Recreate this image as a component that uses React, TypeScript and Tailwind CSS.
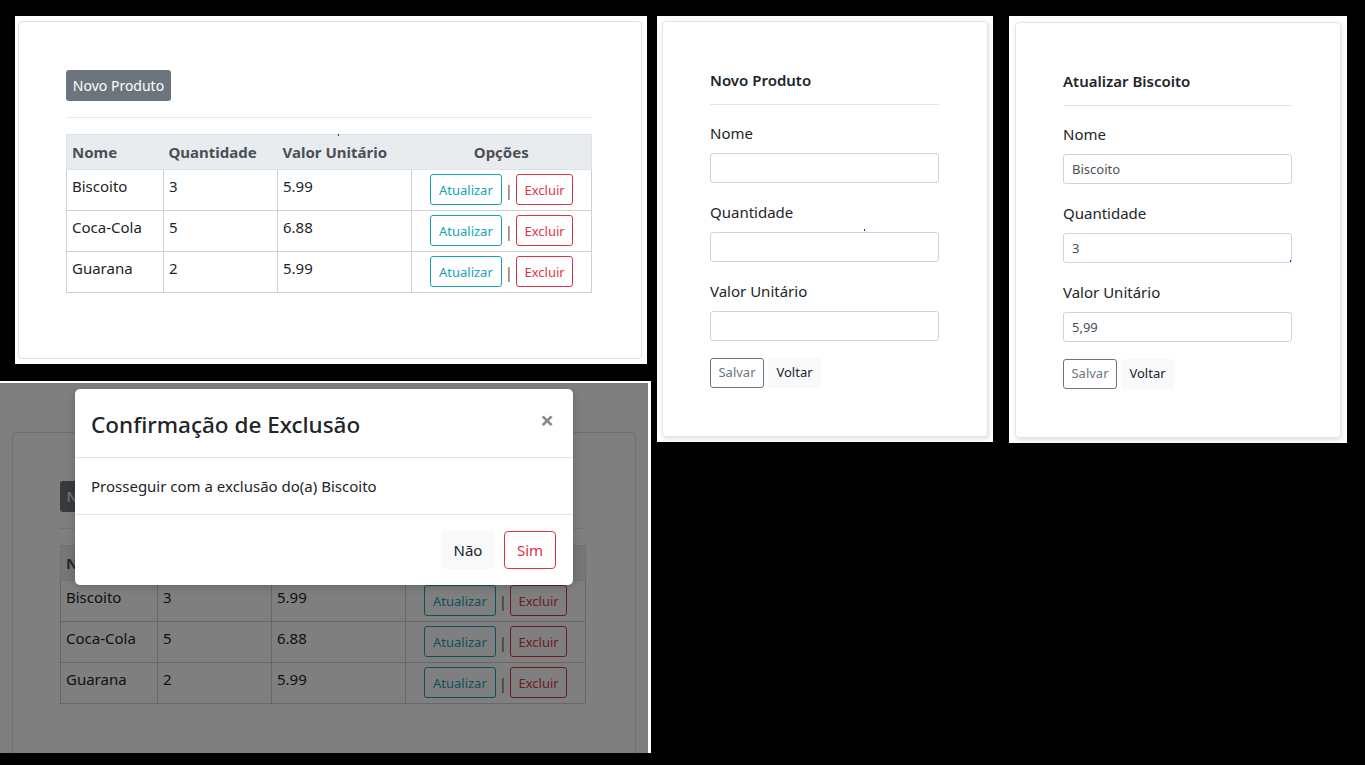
import React from "react";

const rows = [
  ["Biscoito", "3", "5.99"],
  ["Coca-Cola", "5", "6.88"],
  ["Guarana", "2", "5.99"],
];

function ProductTable() {
  const td = "border border-[#cfcfcf] px-[5px] pt-[4px] pb-[5px] align-top";
  return (
    <table className="w-[526px] table-fixed border-collapse text-[15px] leading-6 text-[#212529]">
      <colgroup>
        <col className="w-[97px]" />
        <col className="w-[114px]" />
        <col className="w-[134px]" />
        <col />
      </colgroup>
      <thead>
        <tr className="bg-[#e9ecef] text-[#495057]">
          <th className="border-y border-l border-[#dee2e6] px-[5px] py-[5px] text-left font-bold">Nome</th>
          <th className="border-y border-[#dee2e6] px-[5px] py-[5px] text-left font-bold">Quantidade</th>
          <th className="border-y border-[#dee2e6] px-[5px] py-[5px] text-left font-bold">Valor Unitário</th>
          <th className="border-y border-r border-[#dee2e6] px-[5px] py-[5px] text-center font-bold">Opções</th>
        </tr>
      </thead>
      <tbody>
        {rows.map((r) => (
          <tr key={r[0]}>
            <td className={td}>{r[0]}</td>
            <td className={td}>{r[1]}</td>
            <td className={td}>{r[2]}</td>
            <td className={td}>
              <div className="flex items-center justify-center">
                <button className="h-[31px] w-[72px] rounded-[3px] border border-[#17a2b8] text-[13px] text-[#17a2b8]">
                  Atualizar
                </button>
                <span className="mx-[3px] text-[15px] leading-6 text-[#6b5a3e]">|</span>
                <button className="h-[31px] w-[57px] rounded-[3px] border border-[#dc3545] text-[13px] text-[#dc3545]">
                  Excluir
                </button>
              </div>
            </td>
          </tr>
        ))}
      </tbody>
    </table>
  );
}

function ListCard() {
  return (
    <div className="h-[338px] w-[624px] rounded-[4px] border border-[#dfe1e3] bg-white pl-[47px] pt-[48px]">
      <button className="h-[31px] w-[105px] rounded-[3px] bg-[#6c757d] text-[14px] text-white">
        Novo Produto
      </button>
      <div className="mt-[16px] h-px w-[526px] bg-[#e6e8ea]" />
      <div className="mt-[16px]">
        <ProductTable />
      </div>
    </div>
  );
}

function FormCard({ title, values }: { title: string; values: string[] }) {
  const labels = ["Nome", "Quantidade", "Valor Unitário"];
  const labelMt = ["mt-[16px]", "mt-[17px]", "mt-[17px]"];
  const inputMt = ["mt-[8px]", "mt-[8px]", "mt-[8px]"];
  return (
    <div className="h-[416px] w-[326px] rounded-[4px] border border-[#e3e5e8] bg-white pl-[47px] pt-[46px] shadow-[1px_2px_5px_rgba(0,0,0,0.12)]">
      <div className="w-[229px]">
        <div className="text-[15px] font-semibold leading-6 text-[#212529]">{title}</div>
        <div className="mt-[12px] h-px bg-[#e3e5e8]" />
        {labels.map((l, i) => (
          <div key={l}>
            <div className={`${labelMt[i]} text-[15px] leading-6 text-[#212529]`}>{l}</div>
            <div
              className={`${inputMt[i]} flex h-[30px] items-center rounded-[3px] border border-[#ced4da] px-[8px] pt-[2px] text-[13px] text-[#495057]`}
            >
              {values[i]}
            </div>
          </div>
        ))}
        <div className="mt-[17px] flex gap-[4px]">
          <button className="h-[30px] w-[54px] rounded-[3px] border border-[#6c757d] text-[13px] text-[#6c757d]">
            Salvar
          </button>
          <button className="h-[30px] w-[53px] rounded-[3px] bg-[#f8f9fa] text-[13px] text-[#212529]">
            Voltar
          </button>
        </div>
      </div>
    </div>
  );
}

function Modal() {
  return (
    <div className="absolute left-[75px] top-[6px] w-[498px] rounded-[5px] bg-white shadow-[0_2px_8px_rgba(0,0,0,0.2)]">
      <div className="flex items-start justify-between border-b border-[#e3e5e8] pl-[16px] pr-[19px]">
        <div className="pb-[17px] pt-[21px] text-[22.5px] font-medium leading-[30px] text-[#212529]">
          Confirmação de Exclusão
        </div>
        <div className="mt-[19px] text-[24px] font-bold leading-[24px] text-[#8a8a8a]">×</div>
      </div>
      <div className="border-b border-[#e3e5e8] p-[16px] text-[15px] leading-6 text-[#212529]">
        Prosseguir com a exclusão do(a) Biscoito
      </div>
      <div className="flex justify-end gap-[9px] pb-[16px] pr-[17px] pt-[16px]">
        <button className="h-[38px] w-[54px] rounded-[4px] bg-[#f8f9fa] text-[15px] text-[#212529]">Não</button>
        <button className="h-[38px] w-[52px] rounded-[4px] border border-[#dc3545] text-[15px] text-[#dc3545]">
          Sim
        </button>
      </div>
    </div>
  );
}

export default function App() {
  return (
    <div className="flex h-[765px] w-[1365px] items-start overflow-hidden bg-black font-['Noto_Sans',sans-serif]">
      <div className="flex w-[651px] flex-col">
        <div className="relative ml-[15px] mt-[16px] h-[348px] w-[632px] bg-white pl-[3px] pt-[5px]">
          <ListCard />
          <span className="absolute left-[323px] top-[118px] h-[2px] w-[1px] bg-[#2020e0]" />
        </div>
        <div className="mt-[17px] h-[372px] w-[651px] bg-white pr-[3px] pt-[2px]">
          <div className="relative h-full overflow-hidden bg-white">
            <div className="ml-[12px] mt-[49px]">
              <ListCard />
            </div>
            <div className="absolute inset-0 bg-[rgba(0,0,0,0.5)]" />
            <Modal />
          </div>
        </div>
      </div>
      <div className="relative ml-[6px] mt-[16px] h-[426px] w-[336px] bg-white p-[5px]">
        <FormCard title="Novo Produto" values={["", "", ""]} />
        <span className="absolute left-[207px] top-[213px] h-[2px] w-[1px] bg-[#2020e0]" />
      </div>
      <div className="relative ml-[16px] mt-[16px] h-[427px] w-[338px] bg-white pb-[5px] pl-[6px] pr-[6px] pt-[6px]">
        <FormCard title="Atualizar Biscoito" values={["Biscoito", "3", "5,99"]} />
        <span className="absolute left-[281px] top-[244px] h-[2px] w-[1px] bg-[#2020e0]" />
      </div>
    </div>
  );
}
